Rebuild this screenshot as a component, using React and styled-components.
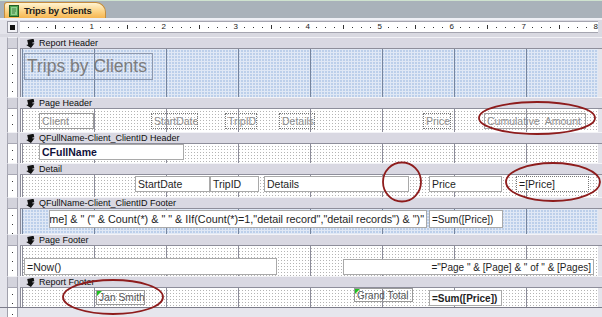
import React from 'react';
import styled, { createGlobalStyle, css } from 'styled-components';

const GlobalStyle = createGlobalStyle`
  html, body { margin: 0; padding: 0; background: #e4e4eb; }
  body { font-family: "Liberation Sans", Arial, sans-serif; }
`;

const Screen = styled.div`
  position: relative;
  width: 602px;
  height: 317px;
  overflow: hidden;
  display: flex;
  flex-direction: column;
  background: #e4e4eb;
`;

const TabStrip = styled.div`
  flex: none;
  height: 18px;
  box-sizing: border-box;
  background: #a9b2ba;
  border-top: 1px solid #cfe3cf;
  display: flex;
  align-items: flex-end;
  padding-left: 4px;
`;

const Tab = styled.div`
  height: 16px;
  box-sizing: border-box;
  display: flex;
  align-items: center;
  gap: 5px;
  padding: 0 13px 0 4px;
  border: 1px solid #c48d3c;
  border-bottom: none;
  border-radius: 3px 10px 0 0;
  background: linear-gradient(#fff4d2, #fcd385 55%, #f6b651);
  font-weight: bold;
  font-size: 9.5px;
  letter-spacing: -0.2px;
  color: #1b1b1b;
`;

const TabRule = styled.div`
  flex: none;
  height: 2px;
  background: #eef0f5;
`;

const RulerRow = styled.div`
  flex: none;
  height: 14px;
  display: flex;
  background: #d9d9e1;
`;

const Gutter = styled.div`
  flex: none;
  width: 20px;
  box-sizing: border-box;
  padding-left: 7px;
  display: flex;
  background: #e4e4eb;
`;

const CornerBox = styled.div`
  width: 11px;
  height: 12px;
  margin-top: 1px;
  box-sizing: border-box;
  background: #f3f3f7;
  border: 1px solid #9b9ba6;
  display: flex;
  align-items: center;
  justify-content: center;
  &::after {
    content: '';
    width: 5px;
    height: 5px;
    background: #111;
  }
`;

const RulerTape = styled.div`
  width: 578px;
  height: 12px;
  margin-top: 1px;
  box-sizing: border-box;
  background: #fff;
  border-top: 1px solid #a5a5b0;
  border-bottom: 1px solid #a5a5b0;
  display: flex;
`;

const Inch = styled.div`
  flex: none;
  width: 72px;
  display: flex;
`;

const Slot = styled.div`
  flex: none;
  width: 9px;
  display: flex;
  align-items: center;
  justify-content: flex-end;
`;

const Tick = styled.span`
  width: 1px;
  height: ${p => (p.$half ? 4 : 1)}px;
  background: #333;
`;

const RulerNum = styled.span`
  font-size: 8px;
  line-height: 8px;
  color: #222;
  margin-right: -2px;
`;

const RulerGap = styled.div`
  flex: none;
  height: 3px;
  background: #d9d9e1;
`;

const BarRow = styled.div`
  flex: none;
  height: 12px;
  display: flex;
`;

const Selector = styled.div`
  width: 11px;
  box-sizing: border-box;
  background: #d3d3dc;
  border: 1px solid #a8a8b4;
  border-top-color: #f2f2f6;
`;

const Bar = styled.div`
  flex: 1;
  box-sizing: border-box;
  background: #d9d8e2;
  border-top: 1px solid #f3f3f7;
  border-bottom: 1px solid #8e8e9b;
  display: flex;
  align-items: center;
  gap: 4px;
  padding-left: 6px;
  font-size: 9px;
  color: #0e0e0e;
  white-space: nowrap;
`;

const BodyRow = styled.div`
  flex: none;
  height: ${p => p.$h}px;
  display: flex;
`;

const VRuler = styled.div`
  width: 11px;
  box-sizing: border-box;
  border-left: 1px solid #a0a0ab;
  border-right: 1px solid #a0a0ab;
  background:
    repeating-linear-gradient(to bottom, transparent 0 6px, #333 6px 7px, transparent 7px 9px) 4px 0 / 1px 100% no-repeat,
    #fff;
`;

const whiteGrid = css`
  background-color: #b4b4b4;
  background-image:
    linear-gradient(to right, transparent 71px, #8c8c9a 71px),
    linear-gradient(to right, #fff 2px, transparent 2px),
    linear-gradient(to bottom, #fff 2px, transparent 2px);
  background-size: 72px 100%, 3px 3px, 3px 3px;
  background-position: 2px 0, 0 0, 0 0;
`;

const blueGrid = css`
  background-color: #bccfea;
  background-image:
    linear-gradient(to right, transparent 71px, #76859e 71px),
    linear-gradient(to right, #e0e8f5 1px, transparent 1px),
    linear-gradient(to bottom, #e0e8f5 1px, transparent 1px);
  background-size: 72px 100%, 3px 3px, 3px 3px;
  background-position: 2px 0, 0 0, 0 0;
`;

const Canvas = styled.div`
  position: relative;
  flex: none;
  width: 578px;
  border-left: 1px solid #8c8c9a;
  box-sizing: border-box;
  ${p => (p.$blue ? blueGrid : whiteGrid)}
`;

const RightFill = styled.div`
  flex: 1;
  background: #e4e4eb;
`;

const Tail = styled.div`
  flex: 1;
  display: flex;
  border-top: 1px solid #7c7c8a;
`;

const TailFill = styled.div`
  flex: 1;
  background: #e6e6ed;
`;

const Control = styled.div`
  position: absolute;
  left: ${p => p.$x}px;
  top: ${p => p.$y}px;
  width: ${p => p.$w}px;
  height: ${p => p.$h}px;
  box-sizing: border-box;
  display: flex;
  align-items: center;
  justify-content: ${p => (p.$right ? 'flex-end' : 'flex-start')};
  padding: 0 2px;
  overflow: hidden;
  white-space: nowrap;
  font-size: ${p => p.$size || 10.5}px;
  font-weight: ${p => (p.$bold ? 'bold' : 'normal')};
  color: ${p => p.$color || '#1e1e1e'};
  background: ${p => (p.$label ? 'transparent' : '#fff')};
  border: 1px ${p => (p.$dotted ? 'dotted' : 'solid')} ${p => p.$border || '#a9a9a9'};
  ${p =>
    p.$flag &&
    css`
      &::before {
        content: '';
        position: absolute;
        left: 0;
        top: 0;
        border-top: 5px solid #1fc11f;
        border-right: 5px solid transparent;
      }
    `}
`;

const Overlay = styled.svg`
  position: absolute;
  left: 0;
  top: 0;
  pointer-events: none;
`;

const ReportIcon = () => (
  <svg width="10" height="12" viewBox="0 0 10 12">
    <rect x="0.5" y="0.5" width="9" height="11" fill="#4fa54f" stroke="#245c24" />
    <rect x="2" y="2" width="6" height="8" fill="#8fd08f" />
    <path d="M3 4h4M3 6h4M3 8h3" stroke="#2f6f2f" strokeWidth="0.8" />
  </svg>
);

const SectionIcon = () => (
  <svg width="9" height="9" viewBox="0 0 9 9">
    <path d="M2 0.5h6.5v3.5h-2v1h2l-4.5 4l-4-4h2z" fill="#111" transform="rotate(-12 4.5 4.5)" />
  </svg>
);

const Ruler = () => (
  <RulerTape>
    {[1, 2, 3, 4, 5, 6, 7, 8].map(n => (
      <Inch key={n}>
        {[1, 2, 3, 4, 5, 6, 7].map(s => (
          <Slot key={s}>
            <Tick $half={s === 4} />
          </Slot>
        ))}
        <Slot>
          <RulerNum>{n}</RulerNum>
        </Slot>
      </Inch>
    ))}
  </RulerTape>
);

const SectionBar = ({ title }) => (
  <BarRow>
    <Gutter>
      <Selector />
    </Gutter>
    <Bar>
      <SectionIcon />
      {title}
    </Bar>
  </BarRow>
);

const SectionBody = ({ h, blue, children }) => (
  <BodyRow $h={h}>
    <Gutter>
      <VRuler />
    </Gutter>
    <Canvas $blue={blue}>{children}</Canvas>
    <RightFill />
  </BodyRow>
);

const HEAD = '#8d8d8d';

export default function App() {
  return (
    <Screen>
      <GlobalStyle />
      <TabStrip>
        <Tab>
          <ReportIcon />
          Trips by Clients
        </Tab>
      </TabStrip>
      <TabRule />
      <RulerRow>
        <Gutter>
          <CornerBox />
        </Gutter>
        <Ruler />
      </RulerRow>
      <RulerGap />

      <SectionBar title="Report Header" />
      <SectionBody h={48} blue>
        <Control $x={3} $y={4} $w={129} $h={27} $label $size={17.5} $color="#7c7c7c" $border="#8d98ad">
          Trips by Clients
        </Control>
      </SectionBody>

      <SectionBar title="Page Header" />
      <SectionBody h={23}>
        <Control $x={18} $y={4} $w={55} $h={16} $label $color={HEAD} $border="#9c9c9c">Client</Control>
        <Control $x={130} $y={4} $w={47} $h={16} $label $dotted $color={HEAD} $border="#777">StartDate</Control>
        <Control $x={204} $y={4} $w={32} $h={16} $label $dotted $color={HEAD} $border="#777">TripID</Control>
        <Control $x={258} $y={4} $w={36} $h={16} $label $dotted $color={HEAD} $border="#777">Details</Control>
        <Control $x={402} $y={4} $w={28} $h={16} $label $dotted $color={HEAD} $border="#777">Price</Control>
        <Control $x={463} $y={4} $w={102} $h={16} $label $color={HEAD} $border="#a5a5a5">Cumulative&nbsp; Amount</Control>
      </SectionBody>

      <SectionBar title="QFullName-Client_ClientID Header" />
      <SectionBody h={19}>
        <Control $x={18} $y={0} $w={145} $h={16} $bold $color="#10103a">CFullName</Control>
      </SectionBody>

      <SectionBar title="Detail" />
      <SectionBody h={22}>
        <Control $x={114} $y={1} $w={75} $h={16}>StartDate</Control>
        <Control $x={189} $y={1} $w={49} $h={16}>TripID</Control>
        <Control $x={243} $y={1} $w={145} $h={16}>Details</Control>
        <Control $x={408} $y={1} $w={73} $h={16}>Price</Control>
        <Control $x={495} $y={1} $w={73} $h={16} $dotted $border="#777">=[Price]</Control>
      </SectionBody>

      <SectionBar title="QFullName-Client_ClientID Footer" />
      <SectionBody h={25} blue>
        <Control $x={28} $y={1} $w={378} $h={18} $right $size={10.8}>
          =[CFullName] &amp; " (" &amp; Count(*) &amp; " " &amp; IIf(Count(*)=1,"detail record","detail records") &amp; ")"
        </Control>
        <Control $x={408} $y={1} $w={74} $h={18} $size={10}>=Sum([Price])</Control>
      </SectionBody>

      <SectionBar title="Page Footer" />
      <SectionBody h={30}>
        <Control $x={3} $y={12} $w={253} $h={17}>=Now()</Control>
        <Control $x={322} $y={13} $w={251} $h={16} $right $size={10}>
          ="Page " &amp; [Page] &amp; " of " &amp; [Pages]
        </Control>
      </SectionBody>

      <SectionBar title="Report Footer" />
      <SectionBody h={19}>
        <Control $x={75} $y={2} $w={49} $h={15} $label $flag $color="#555" $border="#9a9a9a" $size={10.3}>Jan Smith</Control>
        <Control $x={333} $y={0} $w={59} $h={14} $label $flag $color="#555" $border="#9a9a9a" $size={10}>Grand Total</Control>
        <Control $x={408} $y={2} $w={73} $h={16} $bold $size={10}>=Sum([Price])</Control>
      </SectionBody>

      <Tail>
        <Gutter>
          <VRuler />
        </Gutter>
        <TailFill />
      </Tail>

      <Overlay width="602" height="317" viewBox="0 0 602 317">
        <g fill="none" stroke="#8e1c1c" strokeWidth="1.8">
          <ellipse cx="537" cy="118" rx="58" ry="16" />
          <ellipse cx="402" cy="182" rx="19" ry="19.5" />
          <ellipse cx="553" cy="182" rx="47" ry="19" />
          <ellipse cx="113" cy="297" rx="50" ry="17" />
        </g>
      </Overlay>
    </Screen>
  );
}
